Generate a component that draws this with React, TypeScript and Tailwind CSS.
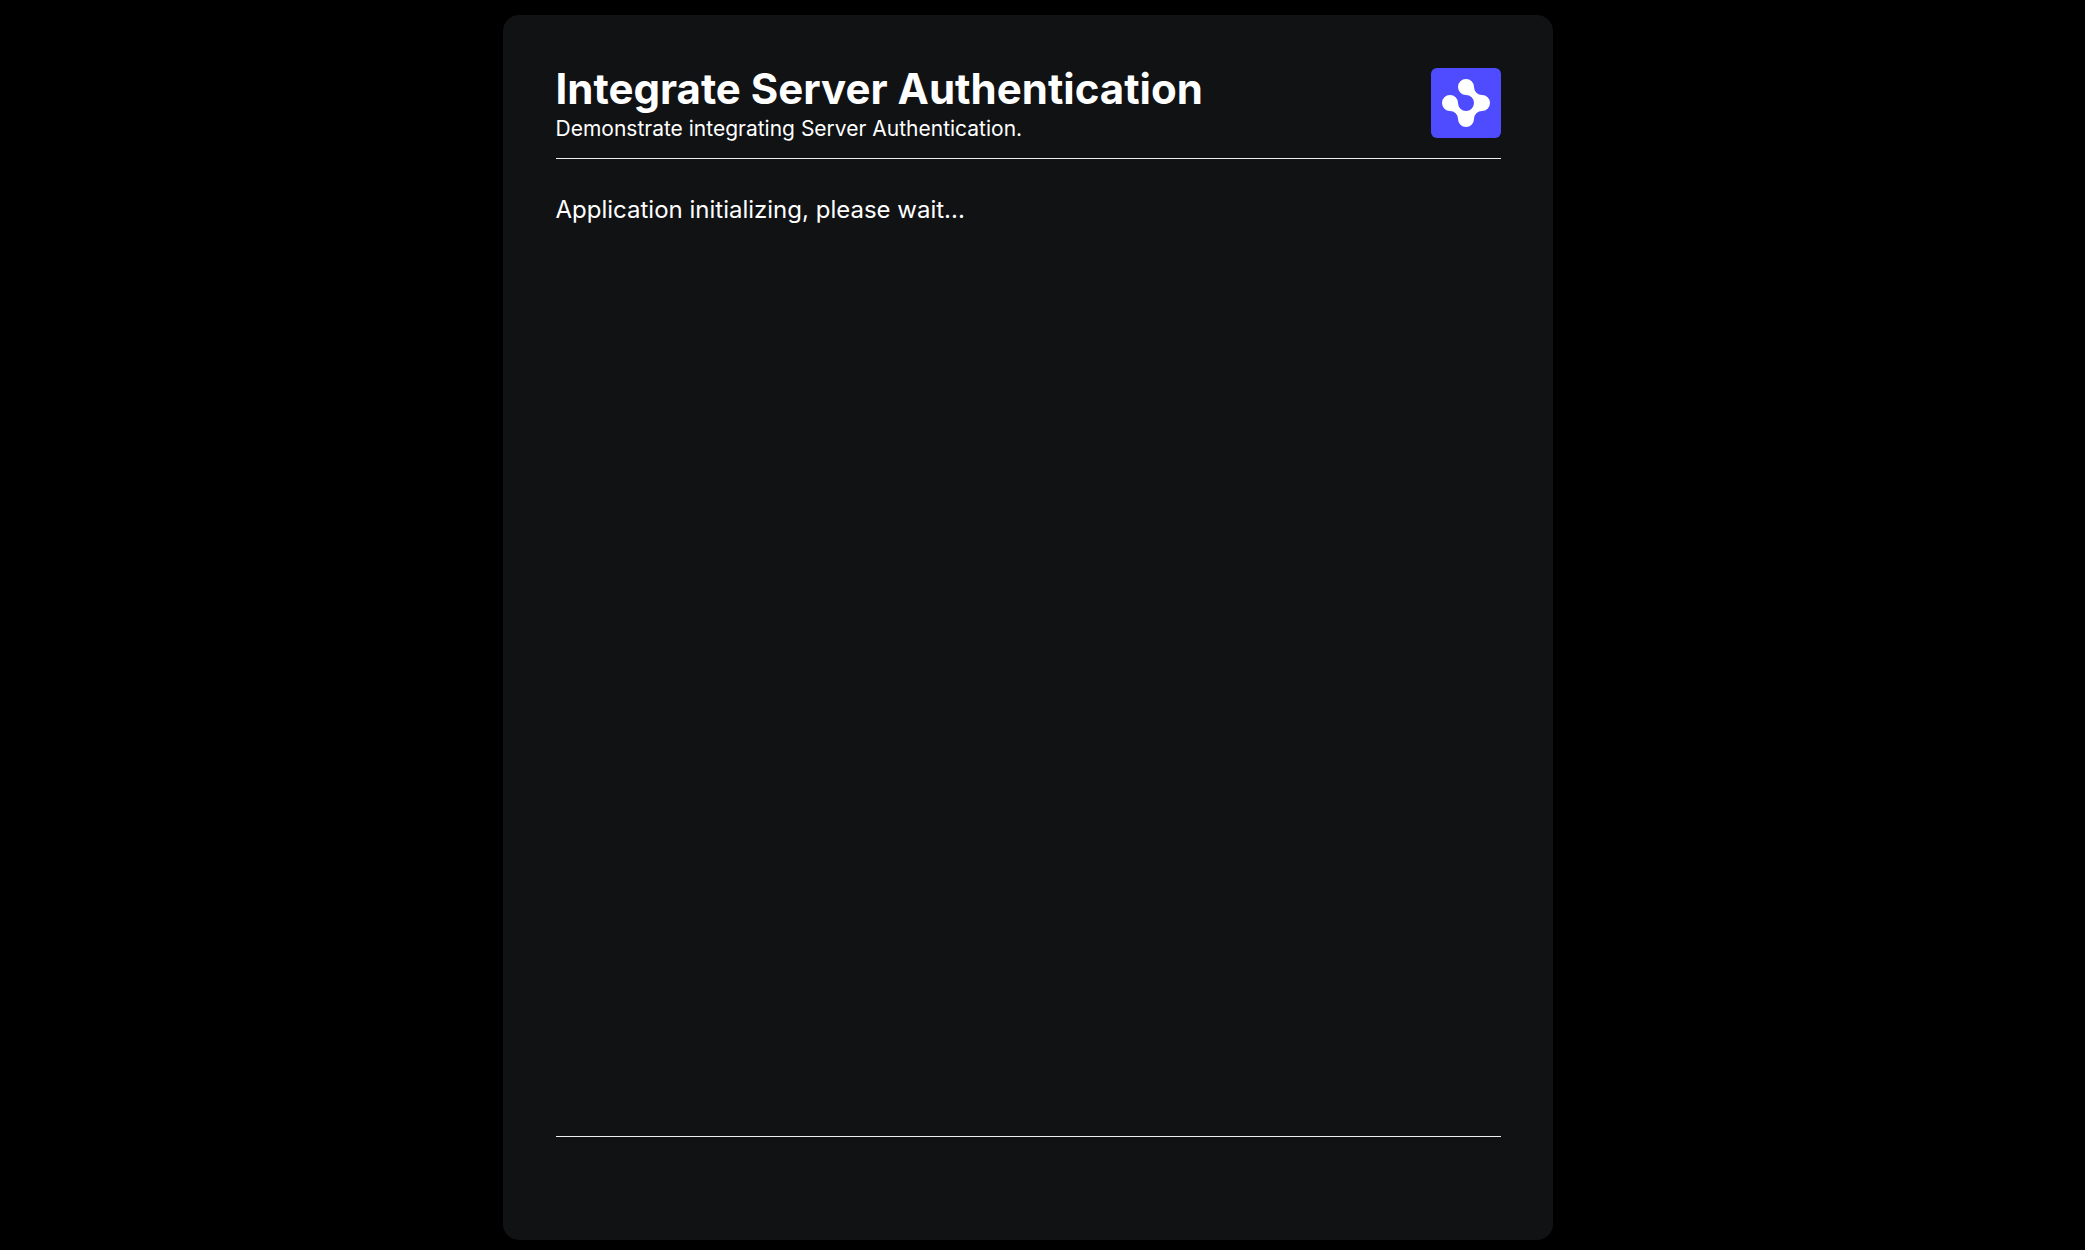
function Logo() {
  return (
    <svg viewBox="0 0 70 70" className="size-[70px] shrink-0 rounded-md bg-[#4f4cff]" role="img" aria-label="Logo">
      <path
        fill="white"
        d="M35 27A8 8 0 1 1 43 19A8 8 0 0 0 51 27A8 8 0 0 1 51 43A8 8 0 0 0 43 51A8 8 0 0 1 27 51A8 8 0 0 0 19 43A8 8 0 1 1 27 35A8 8 0 1 0 35 27Z"
      />
    </svg>
  );
}

export default function App() {
  return (
    <div className="flex min-h-screen flex-col bg-black pt-[15px] pr-[46px] pb-[10px] pl-4 font-['Inter',sans-serif] text-white">
      <main className="mx-auto flex w-full max-w-[1050px] flex-1 flex-col rounded-2xl bg-[#111214] py-[53px] pr-[52px] pl-[53px]">
        <header className="flex items-start justify-between border-b border-[#f0f0f0] pb-3.5">
          <div>
            <h1 className="text-[42px] leading-[42px] font-bold">Integrate Server Authentication</h1>
            <p className="mt-1 text-[21px] leading-[30px]">Demonstrate integrating Server Authentication.</p>
          </div>
          <Logo />
        </header>
        <section className="flex-1 pt-[34px]">
          <p className="text-[24px] leading-[34px]">Application initializing, please wait...</p>
        </section>
        <footer className="h-[51px] border-t border-[#f0f0f0]" />
      </main>
    </div>
  );
}
